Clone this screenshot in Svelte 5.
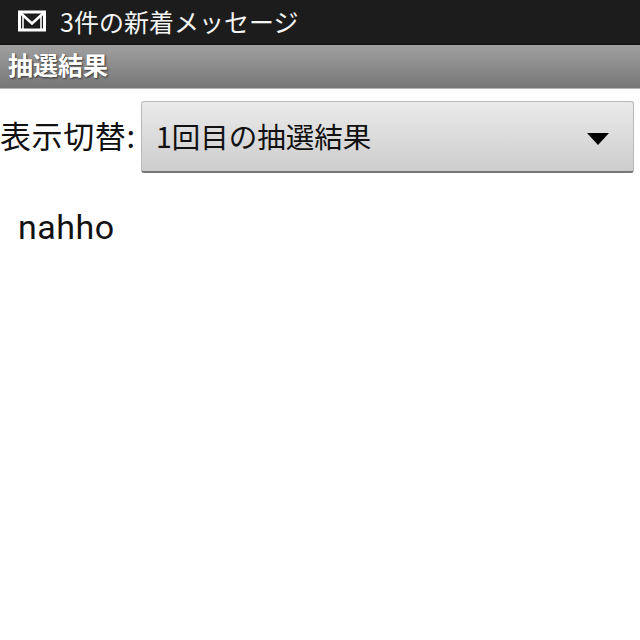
<script>
  let notification = '3件の新着メッセージ';
  let title = '抽選結果';
  let selected = '1回目の抽選結果';
  let winners = ['nahho'];
</script>

<div class="screen">
  <div class="status-bar">
    <svg class="mail-icon" width="30" height="22" viewBox="0 0 30 22" aria-hidden="true">
      <rect x="2.5" y="2" width="25" height="18" fill="#1c1c1c" stroke="#fff" stroke-width="3" />
      <path d="M4 3.5 L15 13.5 L26 3.5" fill="none" stroke="#fff" stroke-width="2.6" />
      <path d="M6 5 V19 M24 5 V19" fill="none" stroke="#fff" stroke-width="1.6" />
    </svg>
    <span class="notification">{notification}</span>
  </div>

  <div class="title-bar">{title}</div>

  <div class="switch-row">
    <span class="switch-label">表示切替:</span>
    <div class="spinner">
      <span>{selected}</span>
      <span class="arrow"></span>
    </div>
  </div>

  <ul class="winners">
    {#each winners as name}
      <li>{name}</li>
    {/each}
  </ul>
</div>

<style>
  :global(body) {
    margin: 0;
    background: #fff;
  }

  .screen {
    width: 640px;
    height: 640px;
    overflow: hidden;
    font-family: "Noto Sans CJK JP", "Noto Sans", sans-serif;
    color: #111;
  }

  .status-bar {
    display: flex;
    align-items: center;
    gap: 13px;
    height: 44px;
    box-sizing: border-box;
    padding: 0 0 2px 17px;
    background: #1c1c1c;
  }

  .mail-icon {
    flex: none;
  }

  .notification {
    color: #f4f4f4;
    font-size: 25px;
    line-height: 1;
    white-space: nowrap;
  }

  .title-bar {
    height: 45px;
    box-sizing: border-box;
    padding: 0 0 4px 8px;
    display: flex;
    align-items: center;
    color: #fff;
    font-size: 25px;
    font-weight: 700;
    line-height: 1;
    text-shadow: 1px 1px 2px #333;
    background: linear-gradient(#a0a0a0, #767676);
    border-top: 1px solid #111;
    border-bottom: 1px solid #b5b5b5;
  }

  .switch-row {
    display: flex;
    align-items: center;
    margin-top: 12px;
    height: 72px;
  }

  .switch-label {
    width: 141px;
    flex: none;
    font-size: 31px;
    line-height: 1;
    letter-spacing: 0.6px;
    white-space: nowrap;
    padding-bottom: 5px;
  }

  .spinner {
    flex: 1;
    height: 72px;
    margin-right: 6px;
    box-sizing: border-box;
    padding: 0 24px 0 14px;
    display: flex;
    align-items: center;
    justify-content: space-between;
    font-size: 28.5px;
    line-height: 1;
    border: 1px solid #b8b8b8;
    border-bottom: 2px solid #777;
    border-radius: 3px;
    background: linear-gradient(#eaeaea, #cdcdcd);
  }

  .arrow {
    width: 0;
    height: 0;
    border-left: 11px solid transparent;
    border-right: 11px solid transparent;
    border-top: 12px solid #000;
    margin-top: 4px;
  }

  .winners {
    list-style: none;
    margin: 31px 0 0;
    padding: 0 0 0 18px;
    font-family: Roboto, "Noto Sans", sans-serif;
    font-size: 34px;
    letter-spacing: 0.5px;
    line-height: 46px;
  }
</style>
